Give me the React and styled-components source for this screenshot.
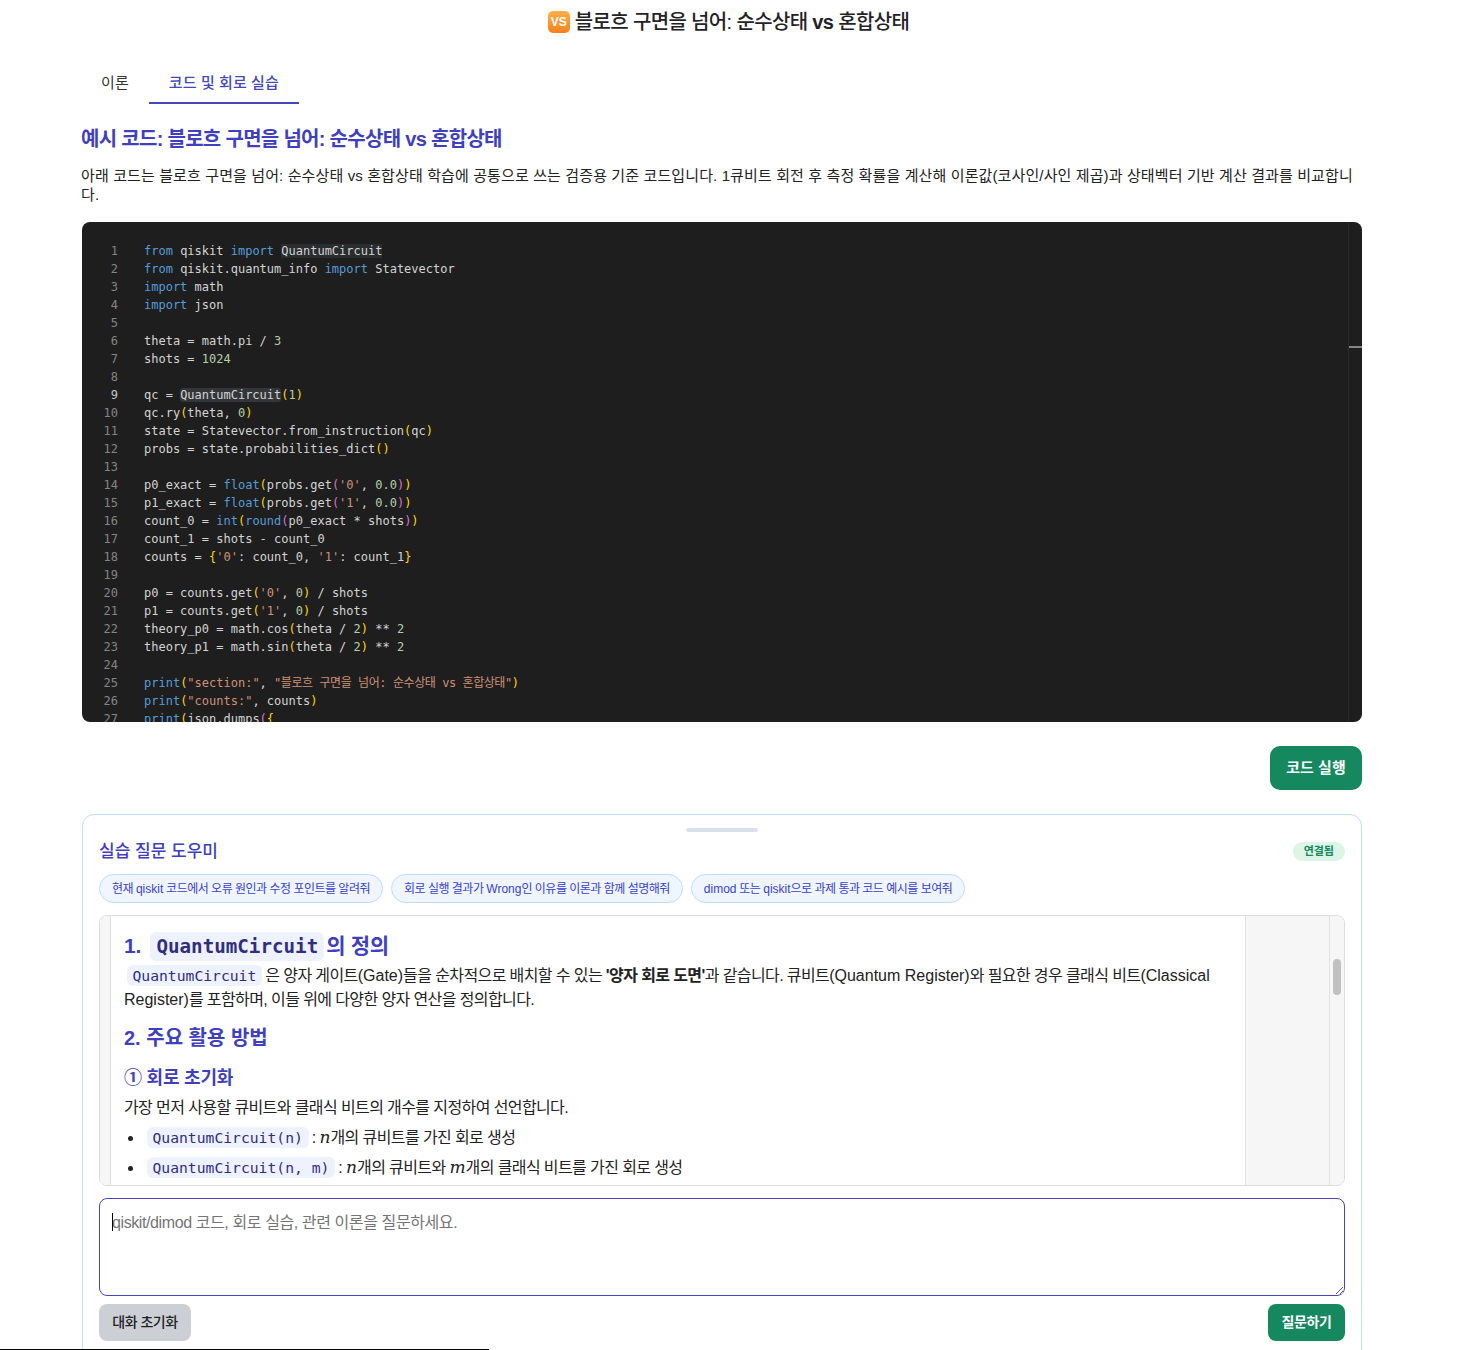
import React from "react";
import styled, { createGlobalStyle } from "styled-components";

const sans = `"Liberation Sans", "Noto Sans CJK KR", sans-serif`;
const mono = `"DejaVu Sans Mono", "Noto Sans CJK KR", monospace`;

const Global = createGlobalStyle`
  html, body { margin: 0; padding: 0; background: #fff; overflow: hidden; }
  #root { height: 100vh; overflow: hidden; }
  * { box-sizing: border-box; }
`;

const Page = styled.div`
  font-family: ${sans};
  color: #1f2328;
  width: 1457px;
`;

const Title = styled.h1`
  display: flex;
  justify-content: center;
  align-items: center;
  gap: 5px;
  margin: 0;
  padding-top: 9px;
  height: 35px;
  font-size: 20px;
  font-weight: 500;
  line-height: 26px;
  letter-spacing: -0.65px;
`;

const VsBadge = styled.span`
  display: inline-flex;
  align-items: center;
  justify-content: center;
  width: 22px;
  height: 22px;
  border-radius: 5px;
  background: linear-gradient(#fdb04a, #f5821e);
  color: #fff;
  font-size: 12px;
  font-weight: 700;
  letter-spacing: 0;
`;

const Main = styled.main`
  width: 1280px;
  margin-left: 82px;
`;

const Tabs = styled.nav`
  display: flex;
  margin: 27px 0 0 -1px;
`;

const Tab = styled.div`
  padding: 0 20px;
  height: 42px;
  line-height: 42px;
  font-size: 15px;
  letter-spacing: 0.1px;
  color: ${(p) => (p.$active ? "#4349b8" : "#333")};
  font-weight: ${(p) => (p.$active ? 500 : 400)};
  border-bottom: 2px solid ${(p) => (p.$active ? "#4349b8" : "transparent")};
`;

const SectionTitle = styled.h2`
  margin: 21px 0 0 -1px;
  font-size: 20px;
  line-height: 28px;
  font-weight: 600;
  letter-spacing: -0.7px;
  color: #3f3fbf;
`;

const Intro = styled.p`
  margin: 13px 0 0 -1px;
  font-size: 15px;
  line-height: 19px;
  letter-spacing: 0.12px;
  color: #222;
`;

const Editor = styled.div`
  display: flex;
  height: 500px;
  margin-top: 18px;
  background: #1e1e1e;
  border-radius: 8px;
  overflow: hidden;
`;

const CodePane = styled.div`
  flex: 1;
  padding-top: 20px;
  font-family: ${mono};
  font-size: 12px;
  line-height: 18px;
  color: #d4d4d4;
`;

const CodeLine = styled.div`
  display: flex;
  height: 18px;
  white-space: pre;
`;

const LineNo = styled.span`
  width: 36px;
  margin-right: 26px;
  text-align: right;
  color: ${(p) => (p.$current ? "#c6c6c6" : "#858585")};
`;

const tokenColors = {
  k: "#569cd6",
  n: "#b5cea8",
  s: "#ce9178",
  c: "#ce9178",
  b: "#ffd700",
  p: "#da70d6",
};

const Token = styled.span`
  color: ${(p) => tokenColors[p.$kind] || "inherit"};
  ${(p) => p.$kind === "c" && "letter-spacing: -0.43px;"}
  ${(p) => p.$kind === "h" && "background: #2a2d2e;"}
  ${(p) => p.$kind === "w" && "background: #33373a; border-radius: 3px;"}
`;

const Ruler = styled.div`
  width: 14px;
  border-left: 1px solid #2b2b2b;
  padding-top: 124px;
`;

const RulerMark = styled.div`
  height: 2px;
  background: #858585;
`;

const RunRow = styled.div`
  display: flex;
  justify-content: flex-end;
  margin-top: 24px;
`;

const GreenButton = styled.button`
  height: ${(p) => (p.$large ? "44px" : "37px")};
  width: ${(p) => (p.$large ? "92px" : "77px")};
  border: 0;
  border-radius: ${(p) => (p.$large ? "10px" : "8px")};
  background: #15885f;
  color: #fff;
  font-family: ${sans};
  font-size: ${(p) => (p.$large ? "15px" : "14px")};
  font-weight: 700;
  letter-spacing: ${(p) => (p.$large ? "0" : "-0.4px")};
  padding: 0 0 3px;
`;

const GrayButton = styled(GreenButton)`
  width: 92px;
  background: #ccd0d6;
  color: #222;
  font-weight: 500;
  letter-spacing: -0.5px;
`;

const ChatPanel = styled.section`
  margin-top: 24px;
  height: 600px;
  padding: 13px 16px 0;
  border: 1px solid #bfdbfe;
  border-radius: 12px;
`;

const DragHandle = styled.div`
  width: 72px;
  height: 4px;
  margin: 0 auto;
  border-radius: 2px;
  background: #d9e2ec;
`;

const ChatHeader = styled.header`
  display: flex;
  justify-content: space-between;
  align-items: center;
  margin-top: 5px;
  height: 26px;
`;

const ChatTitle = styled.h3`
  margin: 0;
  padding-bottom: 2px;
  font-size: 17px;
  font-weight: 500;
  color: #3f3fbf;
`;

const Status = styled.span`
  margin-top: 2px;
  padding: 0 11px;
  height: 19px;
  line-height: 19px;
  border-radius: 10px;
  background: #dcf5e6;
  color: #15885f;
  font-size: 11px;
  font-weight: 700;
`;

const Chips = styled.div`
  display: flex;
  gap: 8px;
  margin-top: 11px;
`;

const Chip = styled.button`
  height: 29px;
  padding: 0 12px 2px;
  border: 1px solid #bfdbfe;
  border-radius: 15px;
  background: #eff6ff;
  color: #3a3fd0;
  font-family: ${sans};
  font-size: 12px;
  letter-spacing: -0.5px;
  white-space: nowrap;
`;

const Latin = styled.span`
  letter-spacing: 0;
`;

const Transcript = styled.div`
  display: grid;
  grid-template-columns: 11px 1fr 84px 15px;
  height: 271px;
  margin-top: 12px;
  border: 1px solid #dedede;
  border-radius: 8px;
  overflow: hidden;
`;

const Gutter = styled.div`
  background: #f6f6f6;
  ${(p) => p.$left && "border-left: 1px solid #e2e2e2;"}
  ${(p) => p.$right && "border-right: 1px solid #e2e2e2;"}
`;

const ScrollTrack = styled(Gutter)`
  padding: 43px 3px 0;
`;

const ScrollThumb = styled.div`
  width: 8px;
  height: 36px;
  border-radius: 4px;
  background: #c1c1c1;
`;

const Message = styled.div`
  padding: 14px 14px 0 13px;
  overflow: hidden;
  font-size: 16px;
  line-height: 24px;
  letter-spacing: -0.6px;
  color: #222;
`;

const H1 = styled.h3`
  margin: 0 0 1px;
  font-size: 21px;
  line-height: 32px;
  font-weight: 700;
  letter-spacing: -0.3px;
  color: #3f3fbf;
`;

const H2 = styled.h4`
  margin: 12px 0 0;
  font-size: 20px;
  line-height: 28px;
  font-weight: 700;
  letter-spacing: 0;
  color: #3f3fbf;
`;

const H3 = styled.h5`
  margin: 13px 0 0;
  font-size: 18px;
  line-height: 26px;
  font-weight: 700;
  letter-spacing: -0.2px;
  color: #3f3fbf;
`;

const Para = styled.p`
  margin: ${(p) => (p.$tight ? "5px 0 0" : "0")};
`;

const Code = styled.code`
  font-family: ${mono};
  font-size: 14.7px;
  letter-spacing: 0;
  padding: 2px 6px;
  margin: 0 3px 0 2.5px;
  border-radius: 6px;
  background: #eef2ff;
  color: #312e81;
`;

const BigCode = styled(Code)`
  font-size: 19.2px;
  font-weight: 700;
  padding: 3px 6px;
  margin: 0 2px 0 4px;
`;

const BulletList = styled.ul`
  margin: 2px 0 0;
  padding-left: 20px;
`;

const Bullet = styled.li`
  height: 30px;
  line-height: 30px;
`;

const MathVar = styled.i`
  font-family: "DejaVu Serif", serif;
  font-size: 17px;
  letter-spacing: 0;
`;

const AskBox = styled.div`
  position: relative;
  margin-top: 12px;
`;

const Question = styled.textarea`
  display: block;
  width: 100%;
  height: 98px;
  padding: 12px;
  border: 1px solid #4349b8;
  border-radius: 8px;
  outline: none;
  font-family: ${sans};
  font-size: 16px;
  line-height: 24px;
  letter-spacing: -0.4px;
  resize: vertical;
  &::placeholder { color: #757575; opacity: 1; }
`;

const Caret = styled.span`
  position: absolute;
  left: 13px;
  top: 15px;
  width: 1px;
  height: 18px;
  background: #000;
`;

const Actions = styled.div`
  display: flex;
  justify-content: space-between;
  margin-top: 8px;
`;

const PageProgress = styled.div`
  position: fixed;
  left: 0;
  bottom: 0;
  width: 489px;
  height: 1px;
  background: #000;
`;

const SOURCE = [
  "[k:from] qiskit [k:import] [h:QuantumCircuit]",
  "[k:from] qiskit.quantum_info [k:import] Statevector",
  "[k:import] math",
  "[k:import] json",
  "",
  "theta = math.pi / [n:3]",
  "shots = [n:1024]",
  "",
  "qc = [w:QuantumCircuit][b:(][n:1][b:)]",
  "qc.ry[b:(]theta, [n:0][b:)]",
  "state = Statevector.from_instruction[b:(]qc[b:)]",
  "probs = state.probabilities_dict[b:()]",
  "",
  "p0_exact = [k:float][b:(]probs.get[p:(][s:'0'], [n:0.0][p:)][b:)]",
  "p1_exact = [k:float][b:(]probs.get[p:(][s:'1'], [n:0.0][p:)][b:)]",
  "count_0 = [k:int][b:(][k:round][p:(]p0_exact * shots[p:)][b:)]",
  "count_1 = shots - count_0",
  "counts = [b:{][s:'0']: count_0, [s:'1']: count_1[b:}]",
  "",
  "p0 = counts.get[b:(][s:'0'], [n:0][b:)] / shots",
  "p1 = counts.get[b:(][s:'1'], [n:0][b:)] / shots",
  "theory_p0 = math.cos[b:(]theta / [n:2][b:)] ** [n:2]",
  "theory_p1 = math.sin[b:(]theta / [n:2][b:)] ** [n:2]",
  "",
  '[k:print][b:(][s:"section:"], [c:"블로흐 구면을 넘어: 순수상태 vs 혼합상태"][b:)]',
  '[k:print][b:(][s:"counts:"], counts[b:)]',
  "[k:print][b:(]json.dumps[p:(][b:{]",
];

function renderTokens(line) {
  return line.split(/(\[\w:[^\]]*\])/).map((part, i) => {
    const m = part.match(/^\[(\w):([^\]]*)\]$/);
    if (m) return <Token key={i} $kind={m[1]}>{m[2]}</Token>;
    return part;
  });
}

export default function App() {
  return (
    <Page>
      <Global />
      <Title>
        <VsBadge>VS</VsBadge>
        <span>블로흐 구면을 넘어: 순수상태 <b>vs</b> 혼합상태</span>
      </Title>
      <Main>
        <Tabs>
          <Tab>이론</Tab>
          <Tab $active>코드 및 회로 실습</Tab>
        </Tabs>
        <SectionTitle>예시 코드: 블로흐 구면을 넘어: 순수상태 <b>vs</b> 혼합상태</SectionTitle>
        <Intro>
          아래 코드는 블로흐 구면을 넘어: 순수상태 vs 혼합상태 학습에 공통으로 쓰는 검증용 기준 코드입니다. 1큐비트 회전 후 측정 확률을 계산해 이론값(코사인/사인 제곱)과 상태벡터 기반 계산 결과를 비교합니다.
        </Intro>
        <Editor>
          <CodePane>
            {SOURCE.map((line, i) => (
              <CodeLine key={i}>
                <LineNo $current={i === 8}>{i + 1}</LineNo>
                <span>{renderTokens(line)}</span>
              </CodeLine>
            ))}
          </CodePane>
          <Ruler><RulerMark /></Ruler>
        </Editor>
        <RunRow>
          <GreenButton $large>코드 실행</GreenButton>
        </RunRow>
        <ChatPanel>
          <DragHandle />
          <ChatHeader>
            <ChatTitle>실습 질문 도우미</ChatTitle>
            <Status>연결됨</Status>
          </ChatHeader>
          <Chips>
            <Chip>현재 <Latin>qiskit</Latin> 코드에서 오류 원인과 수정 포인트를 알려줘</Chip>
            <Chip>회로 실행 결과가 <Latin>Wrong</Latin>인 이유를 이론과 함께 설명해줘</Chip>
            <Chip><Latin>dimod</Latin> 또는 <Latin>qiskit</Latin>으로 과제 통과 코드 예시를 보여줘</Chip>
          </Chips>
          <Transcript>
            <Gutter $right />
            <Message>
              <H1>1. <BigCode>QuantumCircuit</BigCode>의 정의</H1>
              <Para>
                <Code>QuantumCircuit</Code>은 양자 게이트<Latin>(Gate)</Latin>들을 순차적으로 배치할 수 있는 <strong>'양자 회로 도면'</strong>과 같습니다. 큐비트<Latin>(Quantum Register)</Latin>와 필요한 경우 클래식 비트<Latin>(Classical Register)</Latin>를 포함하며, 이들 위에 다양한 양자 연산을 정의합니다.
              </Para>
              <H2>2. 주요 활용 방법</H2>
              <H3>① 회로 초기화</H3>
              <Para $tight>가장 먼저 사용할 큐비트와 클래식 비트의 개수를 지정하여 선언합니다.</Para>
              <BulletList>
                <Bullet><Code>QuantumCircuit(n)</Code>: <MathVar>n</MathVar>개의 큐비트를 가진 회로 생성</Bullet>
                <Bullet><Code>QuantumCircuit(n, m)</Code>: <MathVar>n</MathVar>개의 큐비트와 <MathVar>m</MathVar>개의 클래식 비트를 가진 회로 생성</Bullet>
              </BulletList>
            </Message>
            <Gutter $left />
            <ScrollTrack $left><ScrollThumb /></ScrollTrack>
          </Transcript>
          <AskBox>
            <Question placeholder="qiskit/dimod 코드, 회로 실습, 관련 이론을 질문하세요." />
            <Caret />
          </AskBox>
          <Actions>
            <GrayButton>대화 초기화</GrayButton>
            <GreenButton>질문하기</GreenButton>
          </Actions>
        </ChatPanel>
      </Main>
      <PageProgress />
    </Page>
  );
}
